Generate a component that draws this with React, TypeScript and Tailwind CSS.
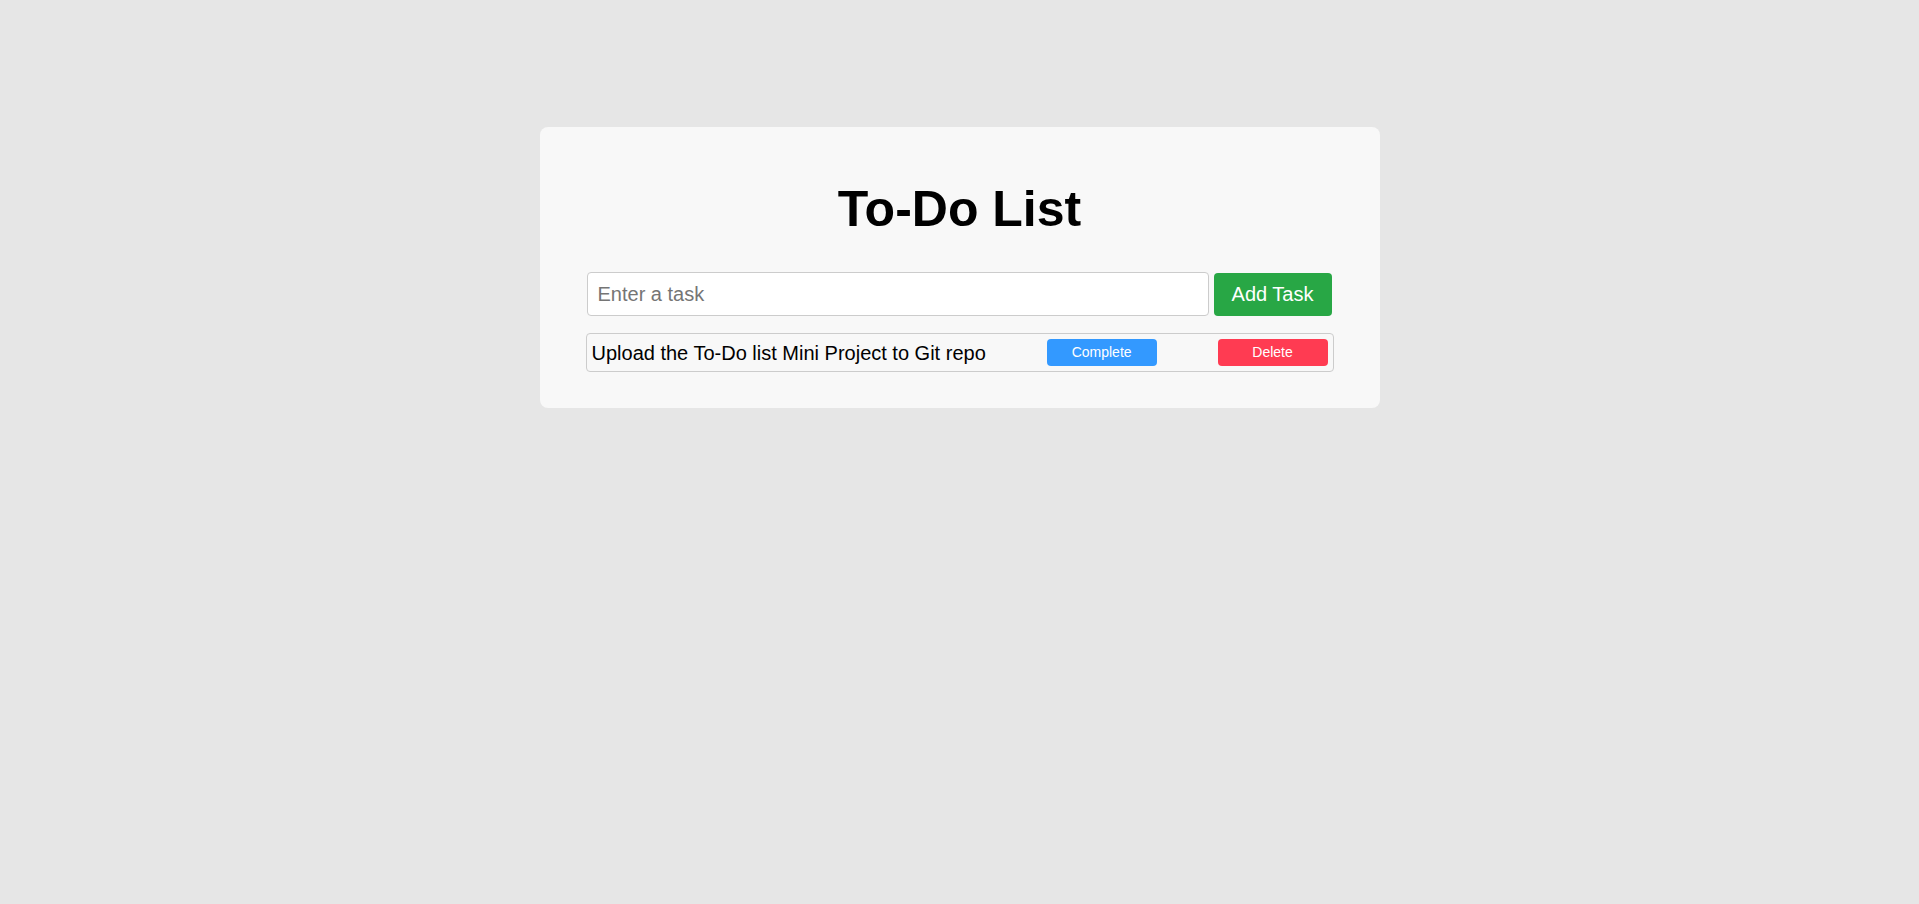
import React from "react";

export default function App() {
  return (
    <div
      className="min-h-[904px] w-full bg-[#e6e6e6] pt-[127px]"
      style={{ fontFamily: '"Liberation Sans", Arial, sans-serif' }}
    >
      <div className="mx-auto w-[840px] rounded-[8px] bg-[#f8f8f8] px-[46px] pt-[57px] pb-[36px]">
        <h1 className="text-center text-[50px] font-bold leading-[50px] text-black">To-Do List</h1>
        <div className="mt-[38px] ml-[1px] mr-[2px] flex items-center gap-[5px]">
          <input
            className="h-[44px] w-[622px] rounded-[4px] border border-[#cccccc] bg-white px-[10px] text-[20px] text-black placeholder:text-[#757575] outline-none"
            placeholder="Enter a task"
          />
          <button className="h-[43px] w-[118px] rounded-[4px] bg-[#28a745] text-[20px] text-white">
            Add Task
          </button>
        </div>
        <ul className="mt-[17px]">
          <li className="flex h-[39px] items-center justify-between rounded-[4px] border border-[#cccccc] px-[5px]">
            <span className="text-[20px] text-black">Upload the To-Do list Mini Project to Git repo</span>
            <button className="h-[27px] w-[110px] rounded-[4px] bg-[#3399ff] text-[14px] text-white">
              Complete
            </button>
            <button className="h-[27px] w-[110px] rounded-[4px] bg-[#ff3b52] text-[14px] text-white">
              Delete
            </button>
          </li>
        </ul>
      </div>
    </div>
  );
}
